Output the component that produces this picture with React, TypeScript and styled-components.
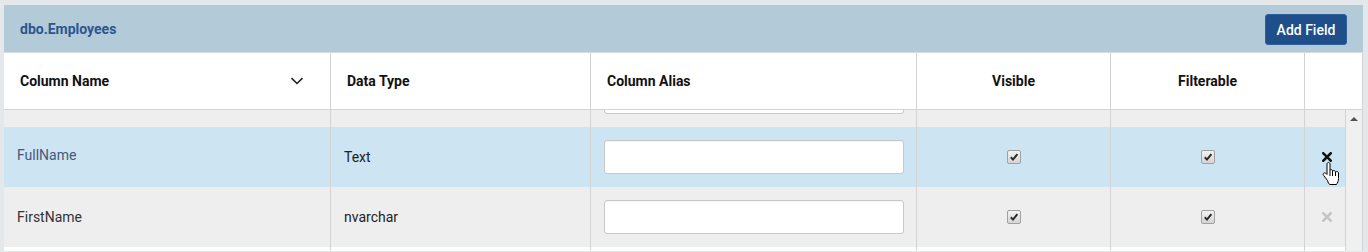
import React from "react";
import styled, { createGlobalStyle } from "styled-components";

const Global = createGlobalStyle`
  html, body { margin: 0; padding: 0; }
  body {
    background: #e4e8eb;
    font-family: Roboto, "Liberation Sans", Arial, sans-serif;
    color: #333;
    width: 1368px;
    height: 252px;
    overflow: hidden;
  }
`;

const Panel = styled.div`
  margin: 5px 0 0 4px;
  width: 1359px;
  background: #fff;
`;

const TitleBar = styled.div`
  height: 47px;
  background: #b3cad9;
  display: flex;
  align-items: center;
  justify-content: space-between;
  padding: 0 16px;
  box-sizing: border-box;
`;

const Title = styled.div`
  font-size: 14px;
  font-weight: 700;
  color: #2a5790;
`;

const AddButton = styled.button`
  width: 82px;
  height: 31px;
  margin-top: 2px;
  background: #1e4f8b;
  border: 1px solid #2f6099;
  border-radius: 3px;
  color: #fff;
  font-family: Roboto, "Liberation Sans", Arial, sans-serif;
  font-size: 14px;
  font-weight: 500;
  padding: 0;
`;

const cols = "327px 260px 326px 194px 194px";

const HeaderRow = styled.div`
  display: grid;
  grid-template-columns: ${cols} 58px;
  height: 58px;
  border-top: 1px solid #d6dbdf;
  border-bottom: 1px solid #d3d3d3;
  box-sizing: border-box;
  background: #fff;
`;

const HeadCell = styled.div<{ $center?: boolean; $padRight?: number }>`
  display: flex;
  align-items: center;
  justify-content: ${(p) => (p.$center ? "center" : "space-between")};
  padding: 0 ${(p) => (p.$center ? 0 : p.$padRight ?? 15)}px 0 ${(p) => (p.$center ? 0 : 16)}px;
  border-right: 1px solid #d3d3d3;
  font-size: 14px;
  font-weight: 700;
  color: #111;
  box-sizing: border-box;
  padding-bottom: 1px;
`;

const Body = styled.div`
  display: flex;
  height: 141px;
  overflow: hidden;
`;

const Rows = styled.div`
  flex: 0 0 1341px;
  position: relative;
  background: #fff;
`;

const RowsInner = styled.div`
  margin-top: -43px;
`;

const Row = styled.div<{ $hover?: boolean }>`
  display: grid;
  grid-template-columns: ${cols} 40px;
  height: 60px;
  background: ${(p) => (p.$hover ? "#cde4f2" : "#eeeeee")};
`;

const Cell = styled.div<{ $center?: boolean; $tone?: string; $shift?: number }>`
  display: flex;
  align-items: center;
  justify-content: ${(p) => (p.$center ? "center" : "flex-start")};
  padding: 0 ${(p) => (p.$center ? "0" : "12px")} 0 ${(p) => (p.$center ? "0" : "13px")};
  border-right: 1px solid #d3d3d3;
  font-size: 14px;
  color: ${(p) => p.$tone || "#222"};
  box-sizing: border-box;
  position: relative;
  span { position: relative; top: ${(p) => p.$shift || 0}px; }
`;

const LastCell = styled(Cell)`
  border-right: none;
  padding-left: 4px;
`;

const Filler = styled.div`
  display: grid;
  grid-template-columns: ${cols} 40px;
  height: 60px;
  & > div { border-right: 1px solid #d3d3d3; }
  & > div:last-child { border-right: none; }
`;

const AliasInput = styled.input`
  width: 300px;
  height: 34px;
  box-sizing: border-box;
  border: 1px solid #c8c8c8;
  border-radius: 3px;
  background: #fff;
  box-shadow: inset 0 1px 1px rgba(0, 0, 0, 0.05);
  outline: none;
`;

const Check = styled.span`
  display: inline-flex;
  align-items: center;
  justify-content: center;
  width: 12px;
  height: 12px;
  border: 1px solid #a0a0a0;
  border-radius: 2px;
  background: linear-gradient(#f2f2f2, #d4d4d4);
`;

const Scrollbar = styled.div`
  flex: 0 0 18px;
  box-sizing: border-box;
  border-left: 1px solid #d3d3d3;
  border-right: 1px solid #d3d3d3;
  background: #f0f0f0;
  display: flex;
  justify-content: center;
  padding-top: 7px;
`;

const UpArrow = styled.div`
  width: 0;
  height: 0;
  border-left: 4px solid transparent;
  border-right: 4px solid transparent;
  border-bottom: 4px solid #505050;
`;

const HandCursor = styled.svg`
  position: absolute;
  left: 17px;
  top: 35px;
`;

const Chevron = () => (
  <svg width="14" height="8" viewBox="0 0 14 8">
    <path d="M1.5 1.2 L7 6.5 L12.5 1.2" fill="none" stroke="#222" strokeWidth="1.6" />
  </svg>
);

const CheckBox = () => (
  <Check>
    <svg width="10" height="10" viewBox="0 0 10 10">
      <path d="M1.8 5.3 L4 7.6 L8.4 2.2" fill="none" stroke="#2a2a2a" strokeWidth="2" />
    </svg>
  </Check>
);

const XIcon = ({ color }: { color: string }) => (
  <svg width="10" height="10" viewBox="0 0 10 10">
    <path d="M1.3 1.3 L8.7 8.7 M8.7 1.3 L1.3 8.7" stroke={color} strokeWidth="2.6" strokeLinecap="square" />
  </svg>
);

const Hand = () => (
  <HandCursor width="18" height="23" viewBox="0 0 18 23">
    <path
      d="M6.5 0.5 C5.7 0.5 5 1.2 5 2 L5 12.5 L3.8 11.3 C3.2 10.7 2.2 10.7 1.6 11.3 C1 11.9 1 12.8 1.6 13.4 L5.5 18.5 C6 20.5 7 22.5 8 22.5 L14.5 22.5 C15.5 21 16.5 19 16.5 16.5 L16.5 11 C16.5 10.2 15.8 9.5 15 9.5 C14.2 9.5 13.5 10.2 13.5 11 L13.5 10 C13.5 9.2 12.8 8.5 12 8.5 C11.2 8.5 10.5 9.2 10.5 10 L10.5 9 C10.5 8.2 9.8 7.5 9 7.5 C8.6 7.5 8.2 7.7 8 8 L8 2 C8 1.2 7.3 0.5 6.5 0.5 Z"
      fill="#fff"
      stroke="#000"
      strokeWidth="1"
    />
    <path d="M8 8 L8 14 M10.5 10 L10.5 14 M13.5 11 L13.5 14" stroke="#000" strokeWidth="1" fill="none" />
  </HandCursor>
);

type Field = { name: string; type: string; hover?: boolean; nameTone?: string; clipped?: boolean };

const fields: Field[] = [
  { name: "", type: "", clipped: true },
  { name: "FullName", type: "Text", hover: true, nameTone: "#46597a" },
  { name: "FirstName", type: "nvarchar", nameTone: "#333" },
];

export default function App() {
  return (
    <>
      <Global />
      <Panel>
        <TitleBar>
          <Title>dbo.Employees</Title>
          <AddButton>Add Field</AddButton>
        </TitleBar>
        <HeaderRow>
          <HeadCell $padRight={26}>
            Column Name
            <Chevron />
          </HeadCell>
          <HeadCell>Data Type</HeadCell>
          <HeadCell>Column Alias</HeadCell>
          <HeadCell $center>Visible</HeadCell>
          <HeadCell $center>Filterable</HeadCell>
          <HeadCell $center />
        </HeaderRow>
        <Body>
          <Rows>
            <RowsInner>
              {fields.map((f, i) => (
                <Row key={i} $hover={f.hover}>
                  <Cell $tone={f.nameTone} $shift={f.hover ? -2 : 0}>
                    {f.name && <span>{f.name}</span>}
                  </Cell>
                  <Cell>{f.type && <span>{f.type}</span>}</Cell>
                  <Cell>
                    <AliasInput />
                  </Cell>
                  <Cell $center>{!f.clipped && <CheckBox />}</Cell>
                  <Cell $center>{!f.clipped && <CheckBox />}</Cell>
                  <LastCell $center>
                    {!f.clipped && <XIcon color={f.hover ? "#111" : "#c4c4c4"} />}
                    {f.hover && <Hand />}
                  </LastCell>
                </Row>
              ))}
              <Filler>
                <div />
                <div />
                <div />
                <div />
                <div />
                <div />
              </Filler>
            </RowsInner>
          </Rows>
          <Scrollbar>
            <UpArrow />
          </Scrollbar>
        </Body>
      </Panel>
    </>
  );
}
